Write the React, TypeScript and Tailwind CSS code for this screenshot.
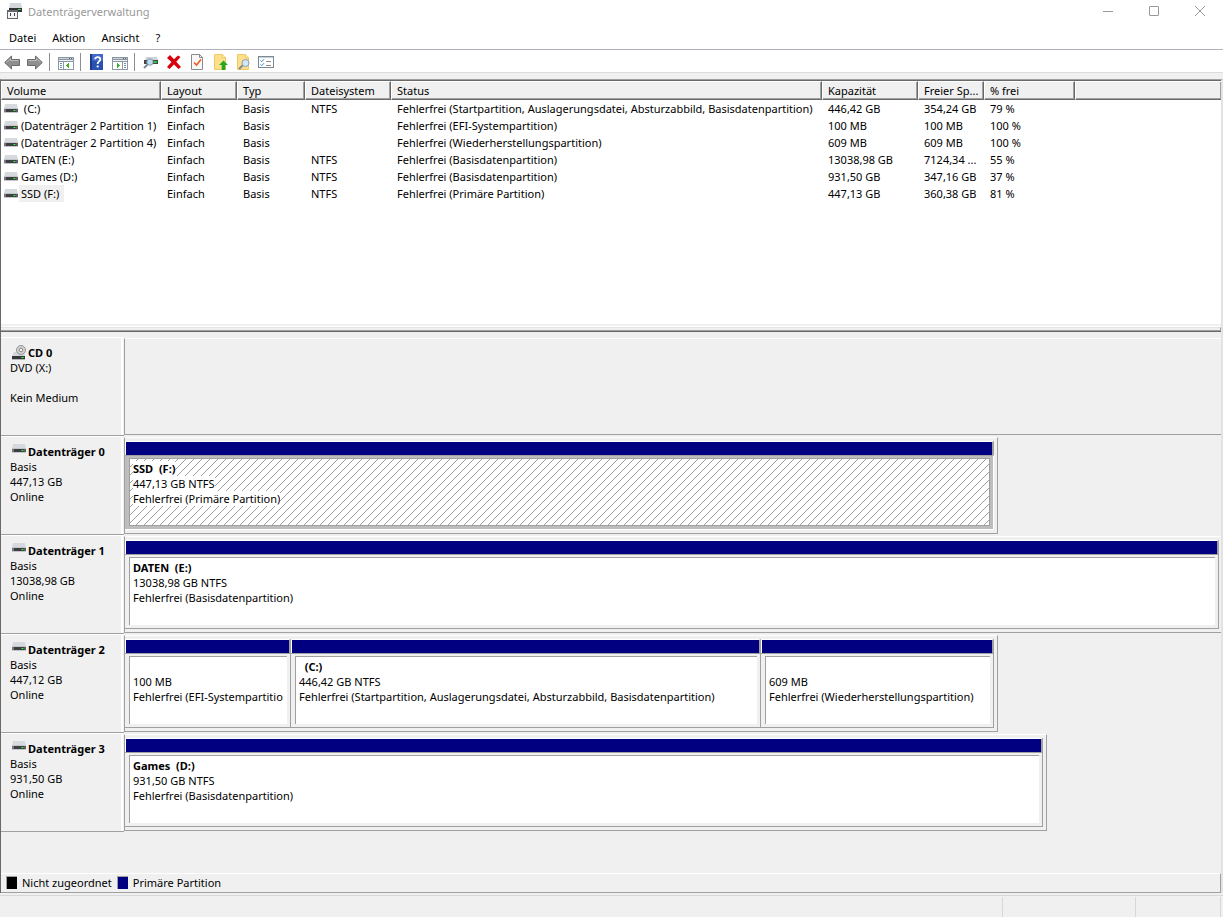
import React from 'react';

interface Volume {
  name: string;
  fileSystem: string;
  status: string;
  capacity: string;
  free: string;
  percent: string;
  selected?: boolean;
}

interface Partition {
  title: string;
  size: string;
  status: string;
  share: number;
  selected?: boolean;
}

interface Disk {
  name: string;
  lines: string[];
  share: number;
  partitions: Partition[];
}

const volumes: Volume[] = [
  { name: '\u00a0(C:)', fileSystem: 'NTFS', status: 'Fehlerfrei (Startpartition, Auslagerungsdatei, Absturzabbild, Basisdatenpartition)', capacity: '446,42 GB', free: '354,24 GB', percent: '79 %' },
  { name: '(Datenträger 2 Partition 1)', fileSystem: '', status: 'Fehlerfrei (EFI-Systempartition)', capacity: '100 MB', free: '100 MB', percent: '100 %' },
  { name: '(Datenträger 2 Partition 4)', fileSystem: '', status: 'Fehlerfrei (Wiederherstellungspartition)', capacity: '609 MB', free: '609 MB', percent: '100 %' },
  { name: 'DATEN (E:)', fileSystem: 'NTFS', status: 'Fehlerfrei (Basisdatenpartition)', capacity: '13038,98 GB', free: '7124,34 ...', percent: '55 %' },
  { name: 'Games (D:)', fileSystem: 'NTFS', status: 'Fehlerfrei (Basisdatenpartition)', capacity: '931,50 GB', free: '347,16 GB', percent: '37 %' },
  { name: 'SSD (F:)', fileSystem: 'NTFS', status: 'Fehlerfrei (Primäre Partition)', capacity: '447,13 GB', free: '360,38 GB', percent: '81 %', selected: true },
];

const disks: Disk[] = [
  {
    name: 'Datenträger 0',
    lines: ['Basis', '447,13 GB', 'Online'],
    share: 874,
    partitions: [
      { title: 'SSD  (F:)', size: '447,13 GB NTFS', status: 'Fehlerfrei (Primäre Partition)', share: 1, selected: true },
    ],
  },
  {
    name: 'Datenträger 1',
    lines: ['Basis', '13038,98 GB', 'Online'],
    share: 1097,
    partitions: [
      { title: 'DATEN  (E:)', size: '13038,98 GB NTFS', status: 'Fehlerfrei (Basisdatenpartition)', share: 1 },
    ],
  },
  {
    name: 'Datenträger 2',
    lines: ['Basis', '447,12 GB', 'Online'],
    share: 874,
    partitions: [
      { title: '', size: '100 MB', status: 'Fehlerfrei (EFI-Systempartition)', share: 166 },
      { title: '  (C:)', size: '446,42 GB NTFS', status: 'Fehlerfrei (Startpartition, Auslagerungsdatei, Absturzabbild, Basisdatenpartition)', share: 470 },
      { title: '', size: '609 MB', status: 'Fehlerfrei (Wiederherstellungspartition)', share: 233 },
    ],
  },
  {
    name: 'Datenträger 3',
    lines: ['Basis', '931,50 GB', 'Online'],
    share: 923,
    partitions: [
      { title: 'Games  (D:)', size: '931,50 GB NTFS', status: 'Fehlerfrei (Basisdatenpartition)', share: 1 },
    ],
  },
];

// Width of a full graphical row, the unit for Disk.share
const FULL_SHARE = 1097;
// Border and padding of a row's frame, which flex adds on top of the grown width
const FRAME = 5;

const columns = ['Volume', 'Layout', 'Typ', 'Dateisystem', 'Status', 'Kapazität', 'Freier Sp...', '% frei', ''];

function DriveIcon() {
  return (
    <svg width="14" height="9" viewBox="0 0 14 9" className="shrink-0" aria-hidden="true">
      <path d="M1 0h12l1 5H0z" fill="#d6d9de" />
      <rect y="4" width="14" height="1" fill="#c3c7cc" />
      <rect y="5" width="14" height="3" fill="#3d3f42" />
      <rect y="5" width="2" height="3" fill="#77797c" />
      <rect x="12" y="5" width="2" height="3" fill="#5c5f62" />
      <rect y="8" width="14" height="1" fill="#c4c7cb" />
      <rect x="9" y="6" width="3" height="1" fill="#1f9d2c" />
      <rect x="10" y="6" width="1" height="1" fill="#4dff5c" />
    </svg>
  );
}

function CdIcon() {
  return (
    <svg width="14" height="15" viewBox="0 0 14 15" className="shrink-0" aria-hidden="true">
      <path d="M2 7h10l1 4H0z" fill="#d3d6db" />
      <circle cx="9" cy="5" r="4.500" fill="#d2d2d2" stroke="#969696" />
      <circle cx="9" cy="5" r="1.800" fill="#f4f4f4" stroke="#8b8b8b" />
      <rect y="11" width="13" height="3" fill="#35373a" />
      <rect y="14" width="13" height="1" fill="#b4b7bb" />
      <rect x="9" y="12" width="3" height="1" fill="#2fd03d" />
    </svg>
  );
}

function AppIcon() {
  return (
    <svg width="17" height="16" viewBox="0 0 17 16" aria-hidden="true">
      <path d="M4 0h11l1 5H3z" fill="#d3d6db" />
      <rect x="3" y="5" width="13" height="4" fill="#303235" />
      <rect x="12" y="6" width="3" height="1" fill="#39d447" />
      <rect x="1" y="7" width="11" height="9" fill="#63666a" />
      <rect x="2" y="9" width="9" height="6" fill="#f4f4f4" />
      <rect x="4" y="10" width="1" height="3" fill="#444" />
      <rect x="8" y="10" width="1" height="3" fill="#444" />
    </svg>
  );
}

function ArrowIcon({ flip }: { flip?: boolean }) {
  return (
    <svg width="16" height="16" viewBox="0 0 16 16" className={flip ? '-scale-x-100' : ''} aria-hidden="true">
      <path d="M.7 8.500 7.500 2v3.500h8v6h-8V15z" fill="#8f8f8f" stroke="#6a6a6a" strokeLinejoin="round" />
      <path d="M2.500 8.300 6.500 4.500v2h8" fill="none" stroke="#bdbdbd" />
    </svg>
  );
}

function PaneIcon({ right }: { right?: boolean }) {
  return (
    <svg width="16" height="16" viewBox="0 0 16 16" shapeRendering="crispEdges" aria-hidden="true">
      <rect y="3" width="16" height="13" fill="#8d97a3" />
      <rect x="1" y="4" width="14" height="1" fill="#c9d0d8" />
      <rect x="11" y="4" width="1" height="1" fill="#5b6672" />
      <rect x="13" y="4" width="1" height="1" fill="#5b6672" />
      <rect x="1" y="6" width="14" height="1" fill="#eef1f4" />
      <g transform={right ? 'matrix(-1 0 0 1 16 0)' : undefined}>
        <rect x="1" y="8" width="4" height="7" fill="#fff" />
        <rect x="6" y="8" width="9" height="7" fill="#fff" />
        <rect x="2" y="9" width="2" height="1" fill="#6d8fc0" />
        <rect x="2" y="11" width="2" height="1" fill="#6d8fc0" />
        <rect x="2" y="13" width="2" height="1" fill="#6d8fc0" />
        <path d="M11 9v5L8 11.500z" fill="#43b02e" />
      </g>
    </svg>
  );
}

function HelpIcon() {
  return (
    <svg width="16" height="16" viewBox="0 0 16 16" aria-hidden="true">
      <rect x="1" width="13" height="16" fill="#2a50b0" />
      <rect x="1" width="2" height="16" fill="#183a8e" />
      <rect x="3" width="11" height="7" fill="#4169cb" />
      <path d="M6 5.200C6 2.500 11.300 2.500 11.300 5.400 11.300 7.400 8.600 7.400 8.600 10" fill="none" stroke="#fff" strokeWidth="1.800" />
      <rect x="7.700" y="11.500" width="1.900" height="1.900" fill="#fff" />
    </svg>
  );
}

function RescanIcon() {
  return (
    <svg width="16" height="16" viewBox="0 0 16 16" aria-hidden="true">
      <path d="M3 3h11l1 3H2z" fill="#cfd2d7" />
      <rect x="1" y="6" width="14" height="4" fill="#44474a" />
      <rect x="11" y="7" width="3" height="2" fill="#27c437" />
      <path d="M5 10 1 14" stroke="#7b8998" strokeWidth="2" />
      <circle cx="7" cy="8" r="3.200" fill="#b8dcf2" stroke="#8799a8" />
    </svg>
  );
}

function DeleteIcon() {
  return (
    <svg width="16" height="16" viewBox="0 0 16 16" aria-hidden="true">
      <path d="M1 4 4 1l4 4.300L12 1.500 14.500 3 10.300 7.800 15 13l-2.500 2L8 10.500 3.500 15 1 13l4.500-5z" fill="#d8000c" />
    </svg>
  );
}

function CheckPageIcon() {
  return (
    <svg width="16" height="16" viewBox="0 0 16 16" aria-hidden="true">
      <path d="M2.500.5h8l3 3v12h-11z" fill="#f8f8f8" stroke="#8a8a8a" />
      <path d="M10.500.5v3h3" fill="none" stroke="#8a8a8a" />
      <path d="m5 8.500 2.500 2.500L12 5.500" fill="none" stroke="#ef5b25" strokeWidth="1.600" />
    </svg>
  );
}

function NoteIcon({ search }: { search?: boolean }) {
  return (
    <svg width="16" height="16" viewBox="0 0 16 16" aria-hidden="true">
      <path d="M2.500.5h8l3 3v12h-11z" fill="#ffe08a" stroke="#eccb66" />
      <path d="M10.500.5v3h3" fill="#fff3c4" stroke="#eccb66" />
      {search ? (
        <g>
          <path d="m8 11-4 4" stroke="#7f8790" strokeWidth="2" />
          <circle cx="10.500" cy="9" r="3.500" fill="#d2e8f6" stroke="#8b9fb0" />
        </g>
      ) : (
        <path d="M11.500 6.500 16 11h-2.700v5H9.700v-5H7z" fill="#22a822" />
      )}
    </svg>
  );
}

function ListIcon() {
  return (
    <svg width="16" height="16" viewBox="0 0 16 16" aria-hidden="true">
      <rect x=".5" y="2.500" width="15" height="11" fill="#fff" stroke="#7c8894" />
      <rect x="1" y="3" width="14" height="1" fill="#c9d0d8" />
      <path d="m2.500 6.500 1.200 1.200L6 5.200M2.500 10.500l1.200 1.200L6 9.200" fill="none" stroke="#2f8ad8" />
      <path d="M8 7.500h5M8 11.500h5" stroke="#8a8a8a" />
    </svg>
  );
}

function ToolButton({ label, children }: { label: string; children: React.ReactNode }) {
  return (
    <button type="button" aria-label={label} className="flex w-[23px] pl-1 pt-1">
      {children}
    </button>
  );
}

function ToolSeparator() {
  return <div className="ml-[3px] mr-1 mt-[3px] h-[18px] w-px bg-[#8e8e8e]" />;
}

function Hatch() {
  return (
    <svg className="absolute inset-0 h-full w-full" shapeRendering="crispEdges" aria-hidden="true">
      <defs>
        <pattern id="hatch" width="8" height="8" patternUnits="userSpaceOnUse">
          <path d="M0 7h1v1H0zM1 6h1v1H1zM2 5h1v1H2zM3 4h1v1H3zM4 3h1v1H4zM5 2h1v1H5zM6 1h1v1H6zM7 0h1v1H7z" fill="#a0a0a0" />
        </pattern>
      </defs>
      <rect width="100%" height="100%" fill="url(#hatch)" />
    </svg>
  );
}

function PartitionBlock({ partition }: { partition: Partition }) {
  const { title, size, status, share, selected } = partition;

  return (
    <div className="flex min-w-0 basis-0 flex-col" style={{ flexGrow: share }}>
      <div className="h-[14px] border-l border-r-2 border-t border-l-white border-r-[#a0a0a0] border-t-white bg-[#000080]" />
      <div
        className={
          selected
            ? 'flex flex-1 border-y border-r border-b-white border-r-white border-t-[#a0a0a0] bg-[#bdbdbd] pb-[3px] pl-1 pr-[3px] pt-[2px]'
            : 'flex flex-1 border-y border-r border-[#a0a0a0] bg-[#f0f0f0] pb-[3px] pl-1 pr-[3px] pt-[2px]'
        }
      >
        <div
          className={
            selected
              ? 'relative min-w-0 flex-1 border border-[#a0a0a0] bg-white'
              : 'relative min-w-0 flex-1 border-l border-t border-[#a0a0a0] bg-white'
          }
        >
          {selected && <Hatch />}
          <div className="relative flex flex-col items-start overflow-hidden whitespace-pre pl-[3px] pr-1 pt-[2px]">
            <div className="h-[15px] bg-white font-bold">{title}</div>
            <div className="h-[15px] bg-white">{size}</div>
            <div className="h-[15px] max-w-full overflow-hidden bg-white">{status}</div>
          </div>
        </div>
      </div>
    </div>
  );
}

function DiskLabel({ name, lines, icon }: { name: string; lines: string[]; icon: React.ReactNode }) {
  return (
    <div className="flex w-[123px] shrink-0 border-b border-t border-b-[#a0a0a0] border-t-white">
      <div className="mr-px flex-1 border-r-2 border-white pl-[9px] pt-[7px]">
        <div className="flex h-[15px] items-start pl-[2px]">
          {icon}
          <h2 className="ml-[2px] whitespace-nowrap font-bold">{name}</h2>
        </div>
        {lines.map((line, index) => (
          <p key={index} className="h-[15px]">{line}</p>
        ))}
      </div>
    </div>
  );
}

export default function App() {
  return (
    <div className="flex min-h-screen flex-col bg-[#f0f0f0] font-['Noto_Sans','Open_Sans',sans-serif] text-[11px] leading-[15px] text-black">
      <header className="flex h-6 items-center bg-white pb-[2px] pl-[6px]">
        <AppIcon />
        <h1 className="ml-[5px] flex-1 text-[#999999]">Datenträgerverwaltung</h1>
        <button type="button" aria-label="Minimieren" className="grid h-[22px] w-[46px] place-items-center">
          <svg width="10" height="10" viewBox="0 0 10 10"><path d="M0 5.500h10" stroke="#999" /></svg>
        </button>
        <button type="button" aria-label="Maximieren" className="grid h-[22px] w-[46px] place-items-center">
          <svg width="10" height="10" viewBox="0 0 10 10"><rect x=".5" y=".5" width="9" height="9" rx=".5" fill="none" stroke="#999" /></svg>
        </button>
        <button type="button" aria-label="Schließen" className="grid h-[22px] w-[46px] place-items-center">
          <svg width="10" height="10" viewBox="0 0 10 10"><path d="m0 0 10 10M10 0 0 10" stroke="#999" /></svg>
        </button>
      </header>

      <nav className="flex h-[26px] items-center gap-4 border-b border-[#b2b2bc] bg-white pl-[9px] pt-[2px]">
        <button type="button">Datei</button>
        <button type="button">Aktion</button>
        <button type="button">Ansicht</button>
        <button type="button">?</button>
      </nav>

      <div className="flex h-[23px] border-b border-[#dcdcdc] bg-white">
        <ToolButton label="Zurück"><ArrowIcon /></ToolButton>
        <ToolButton label="Vorwärts"><ArrowIcon flip /></ToolButton>
        <ToolSeparator />
        <ToolButton label="Konsolenstruktur"><PaneIcon /></ToolButton>
        <ToolSeparator />
        <ToolButton label="Hilfe"><HelpIcon /></ToolButton>
        <ToolButton label="Aktionsbereich"><PaneIcon right /></ToolButton>
        <ToolSeparator />
        <ToolButton label="Datenträger neu einlesen"><RescanIcon /></ToolButton>
        <ToolButton label="Löschen"><DeleteIcon /></ToolButton>
        <ToolButton label="Eigenschaften"><CheckPageIcon /></ToolButton>
        <ToolButton label="Öffnen"><NoteIcon /></ToolButton>
        <ToolButton label="Durchsuchen"><NoteIcon search /></ToolButton>
        <ToolButton label="Ansicht"><ListIcon /></ToolButton>
      </div>

      <main className="mt-[6px] flex flex-1 flex-col border-l border-r-2 border-t border-l-[#696969] border-r-[#e3e3e3] border-t-[#a0a0a0]">
        <section className="flex h-[252px] flex-col border-b border-t border-[#696969]">
          <div className="flex-1 bg-white">
            <table className="w-full table-fixed border-separate border-spacing-0 text-left">
              <colgroup>
                <col className="w-[160px]" />
                <col className="w-[76px]" />
                <col className="w-[68px]" />
                <col className="w-[86px]" />
                <col className="w-[431px]" />
                <col className="w-[96px]" />
                <col className="w-[66px]" />
                <col className="w-[91px]" />
                <col />
              </colgroup>
              <thead>
                <tr className="h-[19px]">
                  {columns.map((column, index) => (
                    <th
                      key={index}
                      className="h-[19px] whitespace-nowrap border-b border-l border-r border-t border-b-[#696969] border-l-white border-r-[#696969] border-t-white bg-[#f0f0f0] p-0 pl-[5px] font-normal shadow-[inset_-1px_-1px_0_#a0a0a0] last:border-r-0"
                    >
                      {column}
                    </th>
                  ))}
                </tr>
              </thead>
              <tbody className="whitespace-nowrap">
                {volumes.map((volume) => (
                  <tr key={volume.name} className="h-[17px]">
                    <td className="p-0 pl-[3px]">
                      <div className="flex items-center">
                        <DriveIcon />
                        <span className={volume.selected ? 'ml-px h-[17px] bg-[#f0f0f0] pl-[2px] pr-[5px] pt-px' : 'ml-px h-[17px] pl-[2px] pt-px'}>
                          {volume.name}
                        </span>
                      </div>
                    </td>
                    <td className="p-0 pl-[6px]">Einfach</td>
                    <td className="p-0 pl-[6px]">Basis</td>
                    <td className="p-0 pl-[6px]">{volume.fileSystem}</td>
                    <td className="p-0 pl-[6px]">{volume.status}</td>
                    <td className="p-0 pl-[6px]">{volume.capacity}</td>
                    <td className="p-0 pl-[6px]">{volume.free}</td>
                    <td className="p-0 pl-[6px]">{volume.percent}</td>
                    <td className="p-0" />
                  </tr>
                ))}
              </tbody>
            </table>
          </div>
          <div className="h-[3px] border-b border-white bg-[#f0f0f0]" />
          <div className="h-1 border-b border-r border-t border-b-[#a0a0a0] border-r-[#a0a0a0] border-t-[#e3e3e3]" />
        </section>

        <section className="flex-1 pb-4 pt-[5px]">
          <div className="flex h-[99px]">
            <DiskLabel name="CD 0" lines={['DVD (X:)', '', 'Kein Medium']} icon={<CdIcon />} />
            <div className="my-px flex-1 border-b border-l border-t border-b-[#a0a0a0] border-l-[#a0a0a0] border-t-white" />
          </div>
          {disks.map((disk) => (
            <div key={disk.name} className="flex h-[99px]">
              <DiskLabel name={disk.name} lines={disk.lines} icon={<DriveIcon />} />
              <div
                className={
                  disk.share < FULL_SHARE
                    ? 'my-px flex min-w-0 basis-0 border border-[#a0a0a0] border-t-white py-[3px] pr-[3px]'
                    : 'my-px flex min-w-0 basis-0 border-y border-l border-[#a0a0a0] border-t-white py-[3px] pr-[2px]'
                }
                style={{ flexGrow: disk.share - FRAME }}
              >
                {disk.partitions.map((partition, index) => (
                  <PartitionBlock key={index} partition={partition} />
                ))}
              </div>
              {disk.share < FULL_SHARE && <div className="basis-0" style={{ flexGrow: FULL_SHARE - disk.share }} />}
            </div>
          ))}
        </section>

        <div className="flex h-5 items-start border-b border-r border-t border-b-[#a0a0a0] border-r-[#a0a0a0] border-t-white pl-[5px] pt-[2px] leading-[13px]">
          <span className="h-[13px] w-[11px] border-l border-t border-[#a0a0a0] bg-black" />
          <span className="ml-[5px]">Nicht zugeordnet</span>
          <span className="ml-[5px] h-[13px] w-[11px] border-l border-t border-[#a0a0a0] bg-[#000080]" />
          <span className="ml-[5px]">Primäre Partition</span>
        </div>
      </main>

      <footer className="mt-[2px] flex h-[22px] justify-end border-t border-[#d7d7d7] pr-[2px] pt-px">
        <div className="w-[133px] border-l border-[#d7d7d7]" />
        <div className="w-[86px] border-x border-[#d7d7d7]" />
      </footer>
    </div>
  );
}
